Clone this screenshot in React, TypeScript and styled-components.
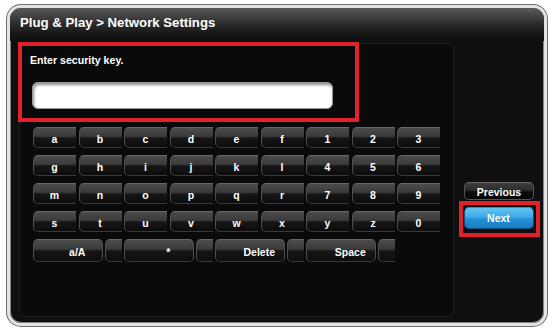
import React from "react";
import styled, { createGlobalStyle } from "styled-components";

const Global = createGlobalStyle`
  html, body { margin: 0; padding: 0; background: #ffffff; }
  body { font-family: "Liberation Sans", Arial, sans-serif; }
  * { box-sizing: border-box; }
`;

const Page = styled.div`
  width: 556px;
  height: 333px;
  padding: 5px 0 0 7px;
`;

const Frame = styled.div`
  width: 540px;
  height: 321px;
  border: 3px solid #e4e4e4;
  border-radius: 14px;
  box-shadow: 0 0 0 1px #6e6e6e, inset 0 0 0 1px #858585;
  background: #0f0f0f;
  display: flex;
  flex-direction: column;
  overflow: hidden;
`;

const TitleBar = styled.div`
  height: 33px;
  flex: none;
  display: flex;
  align-items: center;
  padding: 0 0 4px 10px;
  background: linear-gradient(to bottom, #5a5a5a 0%, #2e2e2e 45%, #121212 85%, #0f0f0f 100%);
  color: #ffffff;
  font-weight: bold;
  font-size: 13.2px;
`;

const Body = styled.div`
  flex: 1;
  display: flex;
  padding: 2px 0 0 9px;
`;

const Panel = styled.div`
  width: 435px;
  height: 274px;
  flex: none;
  background: #0a0a0a;
  border: 1px solid #202020;
  border-radius: 5px;
  display: flex;
  flex-direction: column;
`;

const PromptBox = styled.div`
  width: 341px;
  height: 80px;
  margin: -2px 0 0 -2px;
  border: 4px solid #e1222b;
  padding: 8px 0 0 8px;
  display: flex;
  flex-direction: column;
`;

const PromptText = styled.div`
  color: #ffffff;
  font-weight: bold;
  font-size: 10.6px;
  line-height: 12px;
`;

const KeyInput = styled.div`
  width: 301px;
  height: 27px;
  margin: 16px 0 0 2px;
  background: #ffffff;
  border-radius: 6px;
  border: 1px solid #9a9a9a;
  box-shadow: inset 1px 2px 3px rgba(0, 0, 0, 0.45);
`;

const Keyboard = styled.div`
  display: grid;
  grid-template-columns: repeat(9, 43px);
  grid-template-rows: repeat(4, 21px) 23px;
  column-gap: 2.5px;
  row-gap: 7px;
  margin: 5px 0 0 13px;
`;

const KeyCell = styled.div<{ $span?: number }>`
  grid-column: span ${(p) => p.$span ?? 1};
  display: grid;
  grid-template-columns: minmax(0, 1fr);
  grid-template-rows: minmax(0, 1fr);
  overflow: hidden;
  cursor: pointer;
`;

const Face = styled.div<{ $w: string }>`
  grid-area: 1 / 1;
  width: ${(p) => p.$w};
  height: 100%;
  border-radius: 5px;
  border: 1px solid #4e4e4e;
  border-top-color: #666666;
  border-bottom-color: #3a3a3a;
  background: linear-gradient(
    to bottom,
    #4c4c4c 0%,
    #3a3a3a 44%,
    #161616 52%,
    #0c0c0c 100%
  );
  flex: none;
`;

const FaceRow = styled.div`
  grid-area: 1 / 1;
  display: flex;
  gap: 2px;
  height: 100%;
  min-width: 0;
`;

const Clip = styled.div`
  flex: 1;
  min-width: 0;
  overflow: hidden;
  display: flex;
`;

const KeyLabel = styled.span`
  grid-area: 1 / 1;
  place-self: center;
  position: relative;
  top: 1px;
  color: #ffffff;
  font-weight: bold;
  font-size: 10.5px;
  line-height: 12px;
`;

const Side = styled.div`
  flex: 1;
  display: flex;
  flex-direction: column;
  align-items: center;
  padding-top: 139px;
`;

const PrevButton = styled.div`
  width: 70px;
  height: 18px;
  border-radius: 5px;
  border: 1px solid #555555;
  border-top-color: #666666;
  background: linear-gradient(to bottom, #3e3e3e 0%, #2c2c2c 45%, #0c0c0c 55%, #050505 100%);
  color: #ffffff;
  font-weight: bold;
  font-size: 10.5px;
  display: flex;
  align-items: center;
  justify-content: center;
  padding-top: 1px;
`;

const NextHighlight = styled.div`
  margin-top: 1px;
  border: 4px solid #e1222b;
  padding: 2px 2px 4px 1px;
  display: flex;
`;

const NextButton = styled.div`
  width: 70px;
  height: 22px;
  border-radius: 5px;
  border: 1px solid #0e4f80;
  border-top-color: #3a8ccc;
  background: linear-gradient(to bottom, #62c4f2 0%, #3eaae8 45%, #2290d6 55%, #1a7cc4 100%);
  color: #ffffff;
  font-weight: bold;
  font-size: 10.5px;
  display: flex;
  align-items: center;
  justify-content: center;
`;

const rows: string[][] = [
  ["a", "b", "c", "d", "e", "f", "1", "2", "3"],
  ["g", "h", "i", "j", "k", "l", "4", "5", "6"],
  ["m", "n", "o", "p", "q", "r", "7", "8", "9"],
  ["s", "t", "u", "v", "w", "x", "y", "z", "0"],
];

const bottomKeys = ["a/A", "*", "Delete", "Space"];

export default function App() {
  return (
    <>
      <Global />
      <Page>
        <Frame>
          <TitleBar>Plug &amp; Play &gt; Network Settings</TitleBar>
          <Body>
            <Panel>
              <PromptBox>
                <PromptText>Enter security key.</PromptText>
                <KeyInput />
              </PromptBox>
              <Keyboard>
                {rows.flat().map((k, i) => (
                  <KeyCell key={i}>
                    <Face $w="48px" />
                    <KeyLabel>{k}</KeyLabel>
                  </KeyCell>
                ))}
                {bottomKeys.map((k) => (
                  <KeyCell key={k} $span={2}>
                    <FaceRow>
                      <Face $w="70px" />
                      <Clip>
                        <Face $w="40px" />
                      </Clip>
                    </FaceRow>
                    <KeyLabel>{k}</KeyLabel>
                  </KeyCell>
                ))}
              </Keyboard>
            </Panel>
            <Side>
              <PrevButton>Previous</PrevButton>
              <NextHighlight>
                <NextButton>Next</NextButton>
              </NextHighlight>
            </Side>
          </Body>
        </Frame>
      </Page>
    </>
  );
}
